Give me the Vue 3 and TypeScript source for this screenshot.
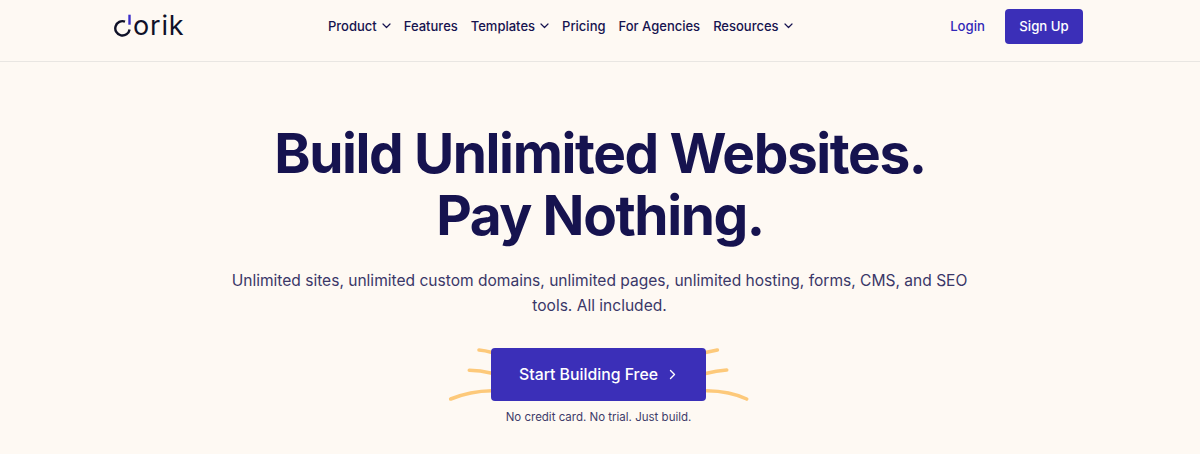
<script setup lang="ts">
interface NavItem { label: string; caret: boolean }
const items: NavItem[] = [
  { label: 'Product', caret: true },
  { label: 'Features', caret: false },
  { label: 'Templates', caret: true },
  { label: 'Pricing', caret: false },
  { label: 'For Agencies', caret: false },
  { label: 'Resources', caret: true },
]
</script>

<template>
  <div class="page">
    <header class="header">
      <a class="logo">
        <svg class="logo-d" width="19" height="24" viewBox="0 0 19 24" fill="none">
          <path d="M11 7.6 A7.2 7.2 0 1 0 15.6 15.5" stroke="#0f1128" stroke-width="2.4" />
          <path d="M15.5 0.7 V10.7" stroke="#3b2fc9" stroke-width="2.4" />
        </svg>
        <span class="logo-text">orik</span>
      </a>
      <nav class="nav">
        <a v-for="item in items" :key="item.label" class="nav-item">
          {{ item.label }}
          <svg v-if="item.caret" class="caret" width="9" height="6" viewBox="0 0 9 6" fill="none">
            <path d="M1 1 L4.5 4.5 L8 1" stroke="#16134f" stroke-width="1.2" stroke-linecap="round" stroke-linejoin="round" />
          </svg>
        </a>
      </nav>
      <div class="actions">
        <a class="login">Login</a>
        <a class="signup">Sign Up</a>
      </div>
    </header>
    <main class="hero">
      <h1 class="title">Build Unlimited Websites.<br />Pay Nothing.</h1>
      <p class="sub">Unlimited sites, unlimited custom domains, unlimited pages, unlimited hosting, forms, CMS, and SEO tools. All included.</p>
      <div class="cta-wrap">
        <svg class="sparks" width="302" height="54" viewBox="0 0 302 54" fill="none">
          <g stroke="#fdc97a" stroke-width="3.6" stroke-linecap="round">
            <path d="M31 2 Q37 2.5 44 4.5" />
            <path d="M21.3 22.3 Q32 22.5 44 25.3" />
            <path d="M2.7 51 Q22 43 44 42.7" />
            <path d="M258.7 4.3 L269.3 2" />
            <path d="M258.7 25.3 Q268 23 278.7 22" />
            <path d="M258.7 42.7 Q282 43 298.7 51" />
          </g>
        </svg>
        <a class="cta">Start Building Free
          <svg class="chev" width="7" height="11" viewBox="0 0 7 11" fill="none">
            <path d="M1.5 1.5 L5.5 5.5 L1.5 9.5" stroke="#fff" stroke-width="1.4" stroke-linecap="round" stroke-linejoin="round" />
          </svg>
        </a>
      </div>
      <p class="note">No credit card. No trial. Just build.</p>
    </main>
  </div>
</template>

<style>
html, body { margin: 0; background: #fef9f3; }
</style>

<style scoped>
.page {
  width: 1200px;
  height: 454px;
  overflow: hidden;
  background: #fef9f3;
  font-family: Inter, "Liberation Sans", sans-serif;
}
.header {
  display: flex;
  align-items: center;
  height: 53px;
  padding: 0 117px 8px 114px;
  border-bottom: 1px solid #e9e6e2;
}
.logo { display: flex; align-items: flex-end; width: 70px; height: 24px; margin-top: -1px; }
.logo-d { flex: none; }
.logo-text {
  font-size: 27px;
  line-height: 24px;
  font-weight: 400;
  color: #0f1128;
  letter-spacing: 0.8px;
}
.nav { display: flex; gap: 13px; margin-left: 144px; margin-top: -1px; }
.nav-item {
  display: flex;
  align-items: center;
  gap: 5px;
  font-size: 13px;
  font-weight: 500;
  color: #16134f;
  line-height: 20px;
}
.actions { display: flex; align-items: center; gap: 20px; margin-left: auto; }
.login { font-size: 13.2px; font-weight: 500; color: #3229b8; margin-top: -1px; }
.signup {
  display: flex;
  align-items: center;
  justify-content: center;
  width: 78px;
  height: 34px;
  padding-bottom: 1px;
  border-radius: 4px;
  background: #3b2fb8;
  color: #fff;
  font-size: 13.2px;
  font-weight: 500;
}
.hero { display: flex; flex-direction: column; align-items: center; padding-top: 60px; }
.title {
  margin: 0;
  font-size: 55px;
  line-height: 62px;
  font-weight: 700;
  letter-spacing: -1.4px;
  color: #16134f;
  text-align: center;
}
.sub {
  width: 760px;
  margin: 22px 0 0 -1px;
  font-size: 15.55px;
  line-height: 25px;
  color: #3a3768;
  text-align: center;
}
.cta-wrap { position: relative; margin-top: 30px; margin-left: -3px; }
.sparks { position: absolute; left: -43px; top: 0; }
.cta {
  position: relative;
  display: flex;
  align-items: center;
  gap: 11px;
  width: 215px;
  height: 53px;
  box-sizing: border-box;
  padding-left: 28px;
  border-radius: 4px;
  background: #3b2fb8;
  color: #fff;
  font-size: 15.8px;
  font-weight: 500;
}
.note { margin: 8px 0 0 -3px; font-size: 11.5px; line-height: 16px; color: #3f3c6a; }
</style>
